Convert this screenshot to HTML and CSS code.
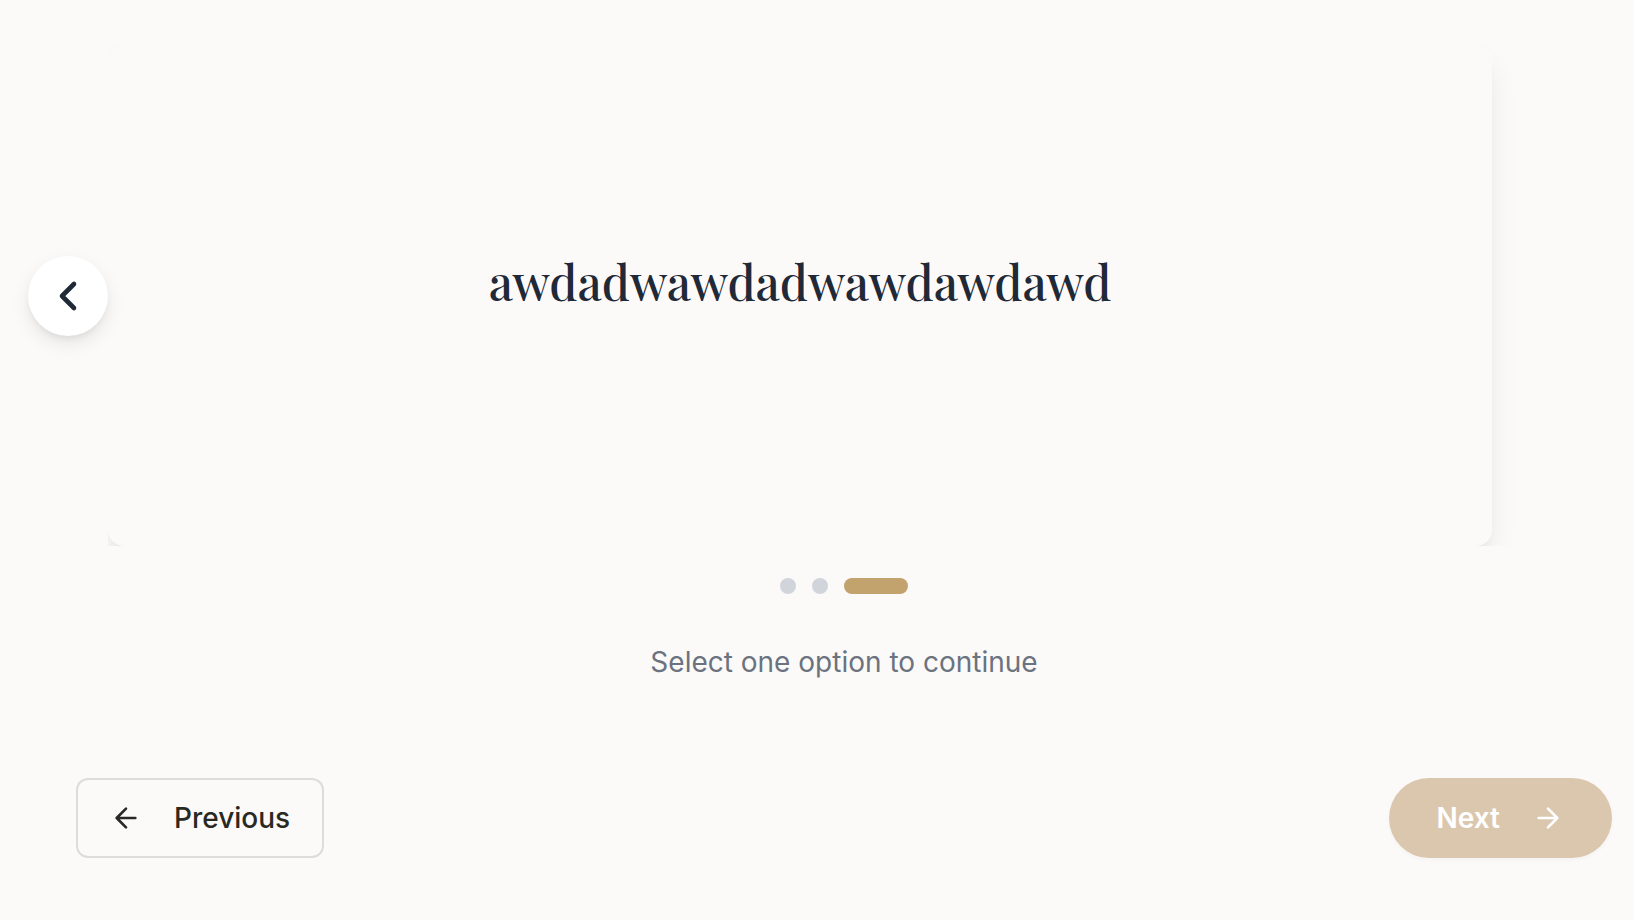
FILE: index.html
```html
<!DOCTYPE html>
<html lang="en">
<head>
<meta charset="utf-8">
<meta name="viewport" content="width=device-width, initial-scale=1">
<title>Select one option</title>
<link rel="stylesheet" href="styles.css">
</head>
<body>
<main class="page">
  <section class="carousel">
    <button class="carousel-prev" type="button" aria-label="Previous slide">
      <svg class="icon-chevron" viewBox="0 0 24 24" aria-hidden="true"><path d="m15 18-6-6 6-6"/></svg>
    </button>
    <div class="viewport">
      <article class="card"><h1 class="card-title">awdadwawdadwawdawdawd</h1></article>
    </div>
  </section>
  <div class="status">
    <div class="dots">
      <button class="dot" type="button" aria-label="Slide 1"></button>
      <button class="dot" type="button" aria-label="Slide 2"></button>
      <button class="dot dot-active" type="button" aria-label="Slide 3" aria-current="true"></button>
    </div>
    <p class="hint">Select one option to continue</p>
  </div>
  <nav class="actions" aria-label="Steps">
    <button class="button button-previous" type="button">
      <svg class="icon-arrow" viewBox="0 0 24 24" aria-hidden="true"><path d="m12 19-7-7 7-7M19 12H5"/></svg>
      <span>Previous</span>
    </button>
    <button class="button button-next" type="button" disabled>
      <span>Next</span>
      <svg class="icon-arrow" viewBox="0 0 24 24" aria-hidden="true"><path d="M5 12h14m-7-7 7 7-7 7"/></svg>
    </button>
  </nav>
</main>
</body>
</html>
```
FILE: styles.css
```css
* {
  box-sizing: border-box;
}

body {
  margin: 0;
  background: #fcfaf8;
  font-family: Inter, "Liberation Sans", sans-serif;
  font-size: 28px;
  line-height: 40px;
}

button {
  margin: 0;
  padding: 0;
  border: 0;
  font: inherit;
}

svg {
  flex: none;
  fill: none;
  stroke: currentColor;
  stroke-linecap: round;
  stroke-linejoin: round;
}

.page {
  padding: 46px 22px 62px 28px;
}

.carousel {
  display: flex;
  align-items: center;
  padding-right: 32px;
}

.carousel-prev {
  display: flex;
  z-index: 1;
  flex: none;
  align-items: center;
  justify-content: center;
  width: 80px;
  height: 80px;
  border-radius: 50%;
  background: #fff;
  color: #1f2937;
  box-shadow: 0 8px 20px -2px rgb(0 0 0 / 10%), 0 4px 8px -4px rgb(0 0 0 / 10%);
}

.icon-chevron {
  width: 48px;
  height: 48px;
  stroke-width: 2.3;
}

.viewport {
  flex: 1;
  min-width: 0;
  overflow: hidden;
  padding-right: 88px;
}

.card {
  display: flex;
  align-items: center;
  justify-content: center;
  min-height: 500px;
  padding: 0 48px 30px;
  border-radius: 16px;
  background: #fcfaf8;
  box-shadow: 0 16px 32px -6px rgb(0 0 0 / 10%), 0 8px 12px -8px rgb(0 0 0 / 10%);
}

.card-title {
  margin: 0;
  color: #1f2937;
  font-family: "Playfair Display", "Liberation Serif", serif;
  font-size: 48px;
  font-weight: 500;
  line-height: 64px;
}

.status {
  display: flex;
  flex-direction: column;
  align-items: center;
  gap: 48px;
  padding: 32px 0 0 48px;
}

.dots {
  display: flex;
  gap: 16px;
}

.dot {
  width: 16px;
  height: 16px;
  border-radius: 8px;
  background: #d1d5db;
}

.dot-active {
  width: 64px;
  background: #c2a26d;
}

.hint {
  margin: 0;
  color: #6b7280;
}

.actions {
  display: flex;
  justify-content: space-between;
  padding: 96px 0 0 48px;
}

.button {
  display: flex;
  align-items: center;
  gap: 32px;
  height: 80px;
  font-weight: 500;
}

.button-previous {
  padding: 0 32px;
  border: 2px solid #dddcda;
  border-radius: 12px;
  background: transparent;
  color: #292924;
}

.button-next {
  padding: 0 48px;
  border-radius: 40px;
  background: #dbc7ae;
  color: #fff;
  font-weight: 600;
  box-shadow: 0 2px 4px rgb(0 0 0 / 3%);
}

.icon-arrow {
  width: 32px;
  height: 32px;
  stroke-width: 2;
}
```
